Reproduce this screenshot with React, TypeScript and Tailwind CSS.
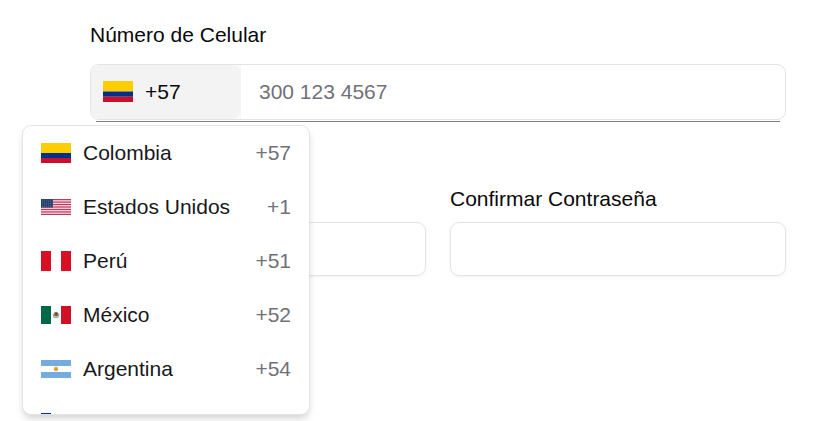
type FlagProps = { code: string; className?: string };

function Flag({ code, className = '' }: FlagProps) {
  const base = 'block w-[30px] shrink-0 ' + className;
  switch (code) {
    case 'co':
      return (
        <svg className={base} viewBox="0 0 30 20" preserveAspectRatio="none">
          <path fill="#ffcd00" d="M0 0h30v10H0z" />
          <path fill="#003087" d="M0 10h30v5H0z" />
          <path fill="#c8102e" d="M0 15h30v5H0z" />
        </svg>
      );
    case 'us':
      return (
        <svg className={base} viewBox="0 0 30 16">
          <path fill="#f6dfe6" d="M0 0h30v16H0z" />
          {[0, 1, 2, 3, 4, 5, 6].map((i) => (
            <rect key={i} y={(i * 32) / 13} width="30" height={16 / 13} fill="#c03a60" />
          ))}
          <path fill="#27446f" d="M0 0h12v8.6H0z" />
          {[1.2, 2.8, 4.4, 6, 7.5].map((y) => (
            <path key={y} d={`M1 ${y}h10.5`} stroke="#8c9bb5" strokeWidth=".5" strokeDasharray=".6 1.4" />
          ))}
        </svg>
      );
    case 'pe':
      return (
        <svg className={base} viewBox="0 0 30 20">
          <path fill="#fff" d="M0 0h30v20H0z" />
          <path fill="#d91023" d="M0 0h10v20H0zM20 0h10v20H20z" />
        </svg>
      );
    case 'mx':
      return (
        <svg className={base} viewBox="0 0 30 18">
          <path fill="#fff" d="M0 0h30v18H0z" />
          <path fill="#006847" d="M0 0h10v18H0z" />
          <path fill="#ce1126" d="M20 0h10v18H20z" />
          <path d="M12.2 8.3c.2 4.6 5.5 4.6 5.7 0" fill="none" stroke="#93a789" strokeWidth="1.2" />
          <path d="M12.6 8.2l1.2-2.2 2-.3 1.4 1.6.2 2-1.7 1.5-2.3-.5z" fill="#94785a" />
          <path d="M14.3 6.8h2.2v2.6h-2.2z" fill="#57523e" />
        </svg>
      );
    case 'ar':
      return (
        <svg className={base} viewBox="0 0 30 18">
          <path fill="#74acdf" d="M0 0h30v18H0z" />
          <path fill="#fff" d="M0 6h30v6H0z" />
          <circle cx="15" cy="9" r="2.4" fill="#f2c879" />
          <circle cx="15" cy="9" r="1.8" fill="#e09a2d" />
        </svg>
      );
    default:
      return (
        <svg className={base} viewBox="0 0 30 20">
          <path fill="#fff" d="M0 0h30v10H0z" />
          <path fill="#0032a0" d="M0 0h10v10H0z" />
          <path fill="#da291c" d="M0 10h30v10H0z" />
        </svg>
      );
  }
}

const countries = [
  { code: 'co', name: 'Colombia', dial: '+57' },
  { code: 'us', name: 'Estados Unidos', dial: '+1' },
  { code: 'pe', name: 'Perú', dial: '+51' },
  { code: 'mx', name: 'México', dial: '+52' },
  { code: 'ar', name: 'Argentina', dial: '+54' },
  { code: 'cl', name: '', dial: '' },
];

export default function App() {
  return (
    <main className="relative h-[421px] w-[828px] overflow-hidden bg-white pl-[90px] pr-[42px] pt-[23px] font-['Liberation_Sans',Arial,sans-serif] text-[21px] leading-6 text-[#09090b]">
      <label htmlFor="phone" className="block">Número de Celular</label>
      <div className="mt-[17px] flex h-14 rounded-[9px] border border-[#e4e4e7]">
        <div className="rounded-l-[9px] bg-[#f9f9f9]">
          <button className="flex h-full w-[150px] items-center rounded-[9px] bg-[#f3f3f3] pl-3 text-left">
            <Flag code="co" className="mb-px h-[21px]" />
            <span className="ml-3">+57</span>
          </button>
        </div>
        <input
          id="phone"
          placeholder="300 123 4567"
          className="min-w-0 flex-1 rounded-r-[9px] bg-white pl-[18px] outline-none placeholder:text-[#71717a] placeholder:opacity-100"
        />
      </div>
      <div className="ml-[6px] mr-[6px] mt-px h-px bg-[#808080]" />

      <div className="mt-[65px] grid grid-cols-2 items-end gap-6">
        <input aria-label="Contraseña" className="block h-[54px] w-full rounded-[9px] border border-[#e4e4e7] shadow-[0_1px_3px_rgba(0,0,0,0.05)]" />
        <div>
          <label htmlFor="confirm" className="block">Confirmar Contraseña</label>
          <input id="confirm" className="mt-[11px] block h-[54px] w-full rounded-[9px] border border-[#e4e4e7] shadow-[0_1px_3px_rgba(0,0,0,0.05)]" />
        </div>
      </div>

      <ul className="absolute left-[22px] top-[125px] h-[290px] w-[288px] overflow-hidden rounded-[9px] border border-[#e4e4e7] bg-white text-[#18181b] shadow-[0_6px_9px_-1px_rgba(0,0,0,0.1),0_3px_6px_-2px_rgba(0,0,0,0.1)]">
        {countries.map((c) => (
          <li key={c.code} className="flex h-[54px] items-center px-[18px]">
            <Flag code={c.code} />
            <span className="ml-3">{c.name}</span>
            <span className="ml-auto text-[#71717a]">{c.dial}</span>
          </li>
        ))}
      </ul>
    </main>
  );
}
